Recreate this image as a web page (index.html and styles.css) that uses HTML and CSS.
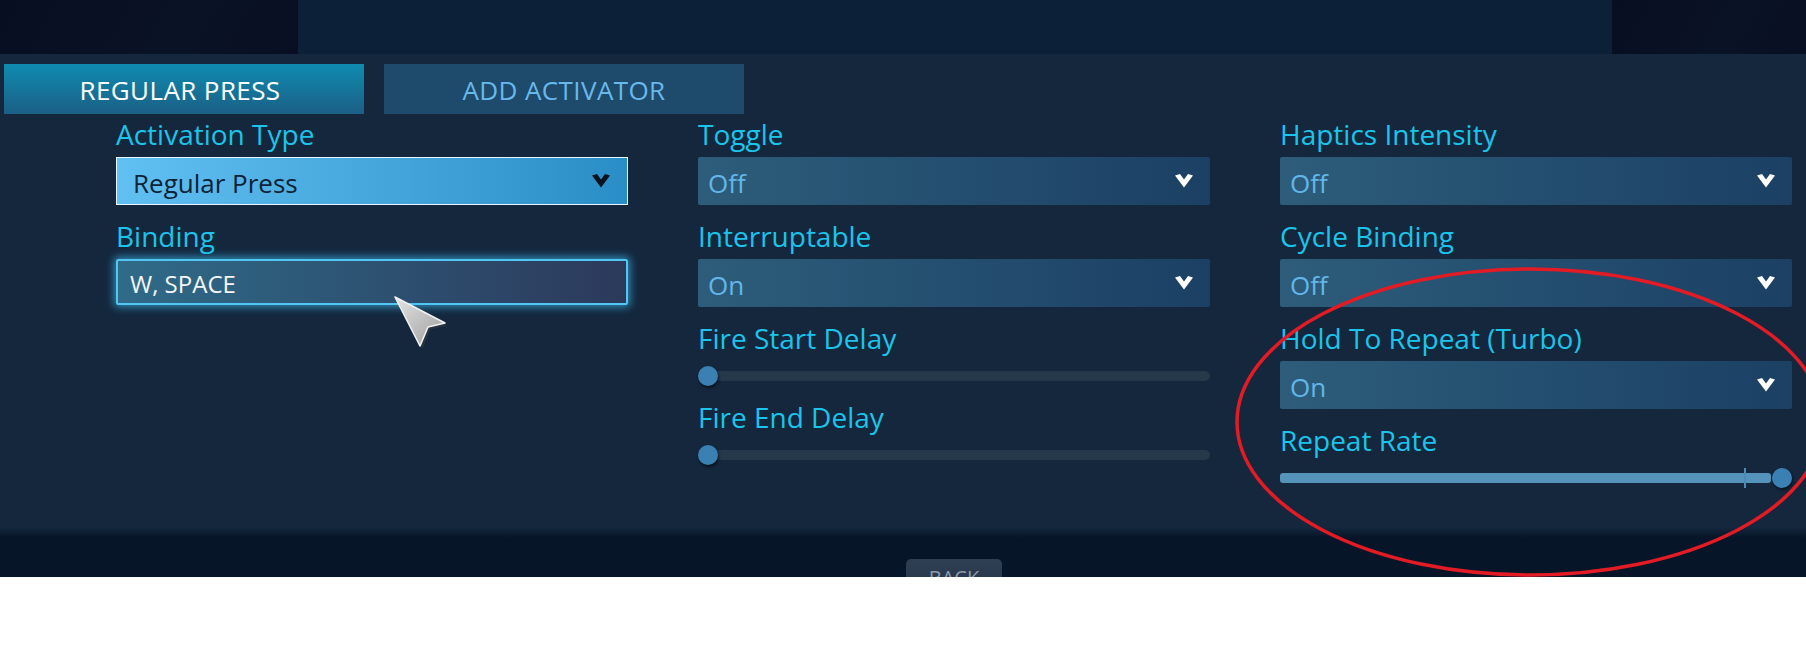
FILE: index.html
```html
<!DOCTYPE html>
<html>
<head>
<meta charset="utf-8">
<link rel="stylesheet" href="styles.css">
</head>
<body>
<div class="screen">
  <div class="topbar">
    <div class="tb-side"></div>
    <div class="tb-mid"></div>
    <div class="tb-side"></div>
  </div>
  <div class="panel">
    <div class="tabs">
      <div class="tab active">REGULAR PRESS</div>
      <div class="tab">ADD ACTIVATOR</div>
    </div>
    <div class="cols">
      <div class="col">
        <div class="field">
          <div class="label">Activation Type</div>
          <div class="select light"><span>Regular Press</span><svg class="chev" viewBox="0 0 18 14"><polygon points="0,1.5 5,0 9,5.5 13,0 18,1.5 9,13.5"/></svg></div>
        </div>
        <div class="field">
          <div class="label">Binding</div>
          <div class="binding">W, SPACE</div>
        </div>
      </div>
      <div class="col">
        <div class="field">
          <div class="label">Toggle</div>
          <div class="select"><span>Off</span><svg class="chev" viewBox="0 0 18 14"><polygon points="0,1.5 5,0 9,5.5 13,0 18,1.5 9,13.5"/></svg></div>
        </div>
        <div class="field">
          <div class="label">Interruptable</div>
          <div class="select"><span>On</span><svg class="chev" viewBox="0 0 18 14"><polygon points="0,1.5 5,0 9,5.5 13,0 18,1.5 9,13.5"/></svg></div>
        </div>
        <div class="field">
          <div class="label">Fire Start Delay</div>
          <div class="slider"><div class="track"></div><div class="knob" style="left:0px"></div></div>
        </div>
        <div class="field">
          <div class="label">Fire End Delay</div>
          <div class="slider"><div class="track"></div><div class="knob" style="left:0px"></div></div>
        </div>
      </div>
      <div class="col">
        <div class="field">
          <div class="label">Haptics Intensity</div>
          <div class="select"><span>Off</span><svg class="chev" viewBox="0 0 18 14"><polygon points="0,1.5 5,0 9,5.5 13,0 18,1.5 9,13.5"/></svg></div>
        </div>
        <div class="field">
          <div class="label">Cycle Binding</div>
          <div class="select"><span>Off</span><svg class="chev" viewBox="0 0 18 14"><polygon points="0,1.5 5,0 9,5.5 13,0 18,1.5 9,13.5"/></svg></div>
        </div>
        <div class="field">
          <div class="label">Hold To Repeat (Turbo)</div>
          <div class="select"><span>On</span><svg class="chev" viewBox="0 0 18 14"><polygon points="0,1.5 5,0 9,5.5 13,0 18,1.5 9,13.5"/></svg></div>
        </div>
        <div class="field">
          <div class="label">Repeat Rate</div>
          <div class="slider"><div class="track filled" style="width:491px"></div><div class="tick" style="left:464px"></div><div class="knob" style="left:492px"></div></div>
        </div>
      </div>
    </div>
  </div>
  <div class="shade"></div>
  <div class="footer">
    <div class="back">BACK</div>
  </div>

  <svg class="cursor" width="58" height="56" viewBox="0 0 58 56">
    <defs>
      <linearGradient id="cg" x1="0" y1="0" x2="1" y2="1">
        <stop offset="0" stop-color="#e4e4e4"/>
        <stop offset="1" stop-color="#9c9c9c"/>
      </linearGradient>
    </defs>
    <polygon points="3,3 53,29 36,33 28,52" fill="#4a4a4a" opacity="0.35" transform="translate(1.5,1.5)"/>
    <polygon points="2,2 52,28 35,32 27,51" fill="url(#cg)" stroke="#f2f2f2" stroke-width="1.6" stroke-linejoin="round"/>
  </svg>

  <svg class="annot" width="1806" height="577" viewBox="0 0 1806 577">
    <ellipse cx="1530" cy="422" rx="293" ry="153" fill="none" stroke="#e31b25" stroke-width="3.5"/>
  </svg>
</div>
</body>
</html>
```

FILE: styles.css
```css
* { box-sizing: border-box; }

body {
  margin: 0;
  background: #ffffff;
  font-family: "Open Sans", "Noto Sans", sans-serif;
}

.screen {
  position: relative;
  width: 1806px;
  height: 577px;
  overflow: hidden;
  background: #061628;
}

.topbar {
  display: grid;
  grid-template-columns: 298px 1fr 194px;
  height: 54px;
}

.tb-side {
  background: linear-gradient(120deg, #080e21, #0a1226 60%, #080f22);
}

.tb-mid {
  background: #0c2038;
}

.panel {
  height: 473px;
  background: #14273d;
  padding: 10px 14px 0 4px;
}

.tabs {
  display: flex;
  gap: 20px;
}

.tab {
  width: 360px;
  height: 50px;
  display: flex;
  align-items: center;
  justify-content: center;
  font-size: 26px;
  letter-spacing: 0.4px;
  color: #68b9eb;
  background: #1e4a6c;
  padding-top: 1px;
}

.tab.active {
  color: #ffffff;
  background: linear-gradient(to bottom, #0f8bb0, #1c5f85);
  padding-right: 8px;
}

.cols {
  display: grid;
  grid-template-columns: repeat(3, 512px);
  column-gap: 70px;
  margin: 4px 0 0 112px;
}

.col {
  display: flex;
  flex-direction: column;
  gap: 15px;
}

.field {
  display: flex;
  flex-direction: column;
}

.label {
  font-size: 28px;
  line-height: 32px;
  height: 32px;
  margin-bottom: 7px;
  color: #1bc4ea;
  white-space: nowrap;
}

.select {
  height: 48px;
  display: flex;
  align-items: center;
  justify-content: space-between;
  padding: 3px 17px 0 10px;
  font-size: 26px;
  color: #62b6ea;
  background: linear-gradient(to right, #2d5d7b, #1b4064);
  border-radius: 2px;
}

.select.light {
  padding-left: 16px;
  color: #0f2236;
  background: linear-gradient(to right, #61c0f2, #2a8ec6);
  border: 1px solid #eaf6ff;
  border-radius: 0;
}

.chev {
  width: 18px;
  height: 14px;
  fill: #ffffff;
  flex: none;
  margin-top: -3px;
}

.select.light .chev {
  fill: #08131e;
}

.binding {
  height: 46px;
  display: flex;
  align-items: center;
  padding: 2px 0 0 12px;
  font-size: 24px;
  color: #f4f6f8;
  background: linear-gradient(to right, #2f6b89, #2c395b);
  border: 2px solid #52c6f2;
  border-radius: 2px;
  box-shadow: 0 0 8px 2px rgba(58, 176, 226, 0.75);
}

.slider {
  position: relative;
  height: 20px;
  padding-top: 5px;
  margin-top: 5px;
}

.track {
  height: 10px;
  border-radius: 5px;
  background: #26394a;
}

.track.filled {
  background: #5593ba;
  border-radius: 3px;
}

.tick {
  position: absolute;
  top: 0;
  width: 2px;
  height: 20px;
  background: #4d8bb4;
}

.knob {
  position: absolute;
  top: 0;
  width: 20px;
  height: 20px;
  border-radius: 50%;
  background: #3a80b3;
  box-shadow: 1px 2px 3px rgba(0, 0, 0, 0.55);
}

.shade {
  height: 10px;
  background: linear-gradient(to bottom, #14273d, #07172a);
}

.footer {
  height: 40px;
  background: #061628;
  padding: 22px 0 0 906px;
}

.back {
  width: 96px;
  height: 34px;
  border-radius: 5px 5px 0 0;
  background: linear-gradient(to bottom, #2f3f53, #26364a);
  color: #8f9aa7;
  font-size: 20px;
  line-height: 24px;
  text-align: center;
  padding-top: 7px;
}

.cursor {
  position: absolute;
  left: 393px;
  top: 295px;
}

.annot {
  position: absolute;
  left: 0;
  top: 0;
  pointer-events: none;
}
```
